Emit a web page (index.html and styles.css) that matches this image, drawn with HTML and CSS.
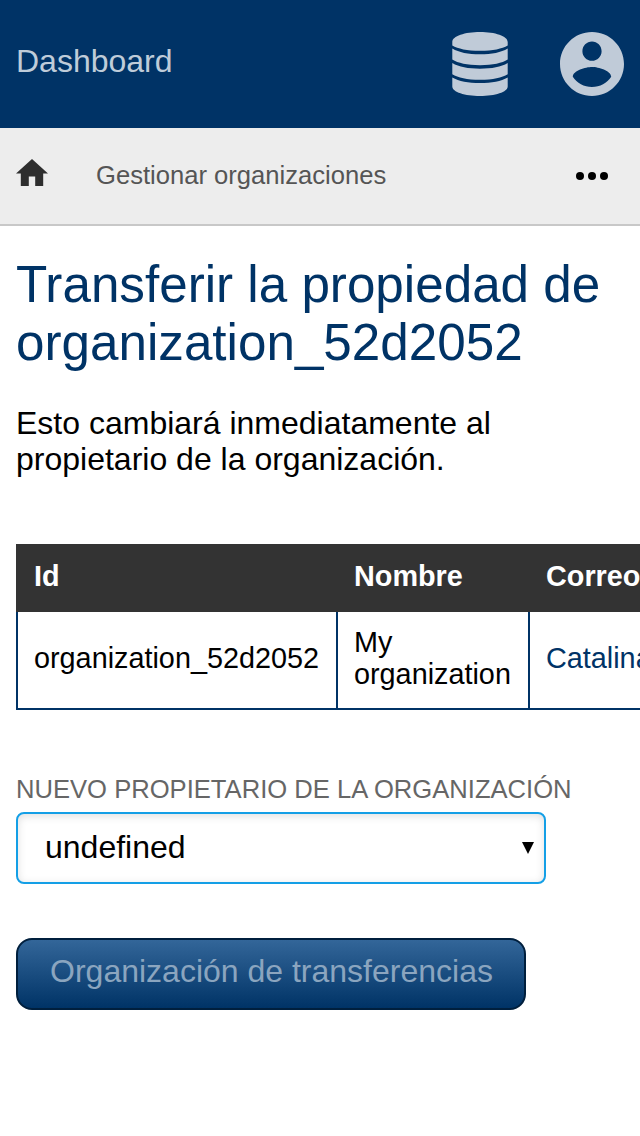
FILE: index.html
```html
<!DOCTYPE html>
<html lang="es">
<head>
<meta charset="utf-8">
<title>Dashboard</title>
<link rel="stylesheet" href="styles.css">
</head>
<body>
<header class="topbar">
  <a class="brand">Dashboard</a>
  <div class="actions">
    <svg class="icon-db" viewBox="0 0 56 64" width="56" height="64"><path d="M28 0C43 0 55.700 4 55.700 10V13.500C50 16.800 41 18.800 28 18.800S6 16.800.3 13.500V10C.3 4 13 0 28 0zM.3 16.400C7 20.400 16 22.200 28 22.200s21-1.800 27.700-5.800V27.600C50 31.200 41 33.200 28 33.200S6 31.200.3 27.600zM.3 31C7 35 16 36.700 28 36.700s21-1.700 27.700-5.700V42.200C50 45.700 41 47.700 28 47.700S6 45.700.3 42.200zM.3 45.500C7 49.400 16 51.100 28 51.100s21-1.700 27.700-5.600V54.500C55.700 60 43 64 28 64S.3 60 .3 54.500z"/></svg>
    <svg viewBox="2 2 20 20" width="64" height="64"><path d="M12 2C6.480 2 2 6.480 2 12s4.480 10 10 10 10-4.480 10-10S17.520 2 12 2zm0 3c1.660 0 3 1.340 3 3s-1.340 3-3 3-3-1.340-3-3 1.340-3 3-3zm0 14.200c-2.500 0-4.710-1.280-6-3.220.03-1.990 4-3.080 6-3.080 1.990 0 5.970 1.090 6 3.080-1.290 1.940-3.500 3.220-6 3.220z"/></svg>
  </div>
</header>
<nav class="crumbs">
  <svg class="home" viewBox="2 3 20 17" width="32" height="27.200"><path d="M10 20v-6h4v6h5v-8h3L12 3 2 12h3v8z"/></svg>
  <span class="crumb">Gestionar organizaciones</span>
  <svg class="more" viewBox="0 0 32 8" width="32" height="8"><circle cx="4" cy="4" r="4"/><circle cx="16" cy="4" r="4"/><circle cx="28" cy="4" r="4"/></svg>
</nav>
<main class="content">
  <h1 class="title">Transferir la propiedad de organization_52d2052</h1>
  <p class="lead">Esto cambiará inmediatamente al propietario de la organización.</p>
  <table class="orgs">
    <thead><tr><th class="col-id">Id</th><th class="col-name">Nombre</th><th class="col-mail">Correo</th></tr></thead>
    <tbody><tr><td>organization_52d2052</td><td>My organization</td><td><a class="link">Catalina</a></td></tr></tbody>
  </table>
  <label class="label">Nuevo propietario de la organización</label>
  <div class="select"><span>undefined</span><svg class="arrow" viewBox="0 0 12 12" width="12" height="12"><path d="M0 0h12L6 12z"/></svg></div>
  <button class="submit" disabled>Organización de transferencias</button>
</main>
</body>
</html>
```
FILE: styles.css
```css
* { box-sizing: border-box; }
html { overflow: hidden; }
body {
  margin: 0;
  height: 1136px;
  overflow: hidden;
  background: #fff;
  color: #000;
  font: 32px/36px "Liberation Sans", Arial, sans-serif;
}
svg { display: block; flex: none; }
.topbar {
  display: flex;
  justify-content: space-between;
  height: 128px;
  padding: 32px 16px;
  background: #036;
}
.brand { padding-top: 11px; color: #bfccd9; }
.actions { display: flex; gap: 52px; fill: #c0cbd8; }
.crumbs {
  display: flex;
  align-items: center;
  height: 98px;
  padding: 0 32px 0 16px;
  background: #ededed;
  border-bottom: 2px solid #c8c8c8;
}
.home { margin-bottom: 7px; fill: #2e2e2e; }
.crumb { flex: 1; margin: -2px 0 0 48px; color: #555; font-size: 25.6px; }
.more { fill: #000; }
.content { padding: 30px 16px 0; }
.title {
  margin: 0;
  color: #036;
  font-size: 51.2px;
  font-weight: 400;
  line-height: 58px;
}
.lead { margin: 33px 0 67px; width: 520px; }
.orgs {
  width: 800px;
  table-layout: fixed;
  border-collapse: separate;
  border-spacing: 0;
  font-size: 28.8px;
  line-height: 32px;
}
.col-id { width: 320px; }
.col-name { width: 192px; }
.orgs th {
  height: 68px;
  padding: 0 18px 4px;
  background: #333;
  color: #fff;
  text-align: left;
}
.orgs td {
  height: 98px;
  padding: 0 8px 4px 16px;
  border-left: 2px solid #036;
  border-bottom: 2px solid #036;
}
.link { color: #036; }
.label {
  display: block;
  margin-top: 64px;
  color: #666;
  font-size: 25.6px;
  line-height: 30px;
  text-transform: uppercase;
}
.select {
  display: flex;
  align-items: center;
  justify-content: space-between;
  width: 530px;
  height: 72px;
  margin: 8px 0 54px;
  padding: 0 10px 2px 27px;
  border: 2px solid #149fe6;
  border-radius: 8px;
  box-shadow: inset 0 2px 8px rgba(0, 0, 0, .13);
}
.arrow { margin-top: 2px; }
.submit {
  display: block;
  width: 510px;
  height: 72px;
  padding: 0 0 6px 1px;
  border: 2px solid #001f3d;
  border-radius: 16px;
  background: linear-gradient(#369, #036);
  color: #8ba5bf;
  font: inherit;
}
```
